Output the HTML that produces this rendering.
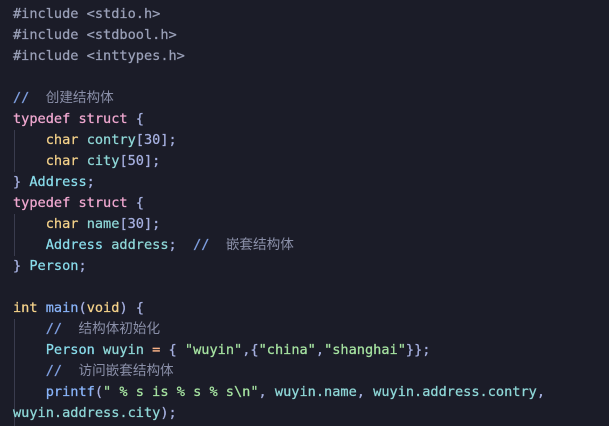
<!DOCTYPE html>
<html><head><meta charset="utf-8"><style>
html,body{margin:0;padding:0;background:#1b1c28;width:609px;height:426px;overflow:hidden}
pre{margin:0;padding:4px 0 0 13px;font-family:"DejaVu Sans Mono",monospace;font-size:13.6px;line-height:21px;color:#cdd6f4;position:relative;white-space:pre;-webkit-text-stroke:0.25px}
.g{position:absolute;left:14px;width:1px;background:#3a3c4e}
.pp{color:#9aa0b8}.k{color:#f0a8d0}.t{color:#f5d28a}.v{color:#8fd8d8}.n{color:#b4befe}
.c{color:#7f9fe0}.cz{color:#8a8fa8;font-family:"Noto Sans CJK SC",sans-serif;line-height:0;-webkit-text-stroke:0}.s{color:#a6e3a1}.f{color:#89b4fa}.ty{color:#89dceb}.p{color:#a6b0e0}.o{color:#fab387}
</style></head><body>
<div class="g" style="top:130px;height:42px"></div>
<div class="g" style="top:214px;height:42px"></div>
<div class="g" style="top:319px;height:107px"></div>
<pre><span class="pp">#include &lt;stdio.h&gt;</span>
<span class="pp">#include &lt;stdbool.h&gt;</span>
<span class="pp">#include &lt;inttypes.h&gt;</span>

<span class="c">// </span> <span class="cz">创建结构体</span>
<span class="k">typedef</span> <span class="k">struct</span> <span class="p">{</span>
    <span class="t">char</span> <span class="v">contry</span><span class="p">[30];</span>
    <span class="t">char</span> <span class="v">city</span><span class="p">[50];</span>
<span class="p">}</span> <span class="ty">Address</span><span class="p">;</span>
<span class="k">typedef</span> <span class="k">struct</span> <span class="p">{</span>
    <span class="t">char</span> <span class="v">name</span><span class="p">[30];</span>
    <span class="ty">Address</span> <span class="v">address</span><span class="p">;</span>  <span class="c">// </span> <span class="cz">嵌套结构体</span>
<span class="p">}</span> <span class="ty">Person</span><span class="p">;</span>

<span class="t">int</span> <span class="f">main</span><span class="p">(</span><span class="t">void</span><span class="p">) {</span>
    <span class="c">// </span> <span class="cz">结构体初始化</span>
    <span class="ty">Person</span> <span class="v">wuyin</span> <span class="o">=</span> <span class="p">{</span> <span class="s">"wuyin"</span><span class="p">,{</span><span class="s">"china"</span><span class="p">,</span><span class="s">"shanghai"</span><span class="p">}};</span>
    <span class="c">// </span> <span class="cz">访问嵌套结构体</span>
    <span class="f">printf</span><span class="p">(</span><span class="s">" % s is % s % s\n"</span><span class="p">,</span> <span class="v">wuyin.name</span><span class="p">,</span> <span class="v">wuyin.address.contry</span><span class="p">,</span>
<span class="v">wuyin.address.city</span><span class="p">);</span></pre>
</body></html>
